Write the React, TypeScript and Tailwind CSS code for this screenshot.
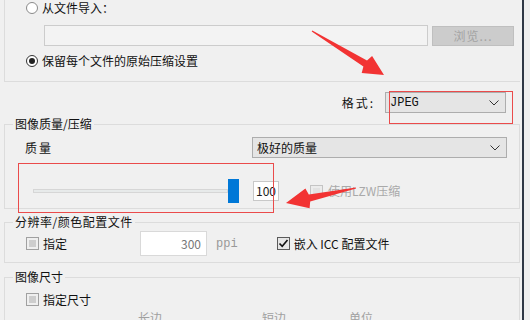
import React from "react";

const cjk = { fontFamily: '"Noto Sans CJK SC", "Noto Sans", sans-serif' };
const mono = { fontFamily: '"Liberation Mono", "Noto Sans CJK SC", monospace' };

function Radio({ checked }: { checked?: boolean }) {
  return (
    <span
      className={`w-[12px] h-[12px] rounded-full border bg-white flex items-center justify-center ${
        checked ? "border-[#333]" : "border-[#8a8a8a]"
      }`}
    >
      {checked && <span className="w-[6px] h-[6px] rounded-full bg-[#222]" />}
    </span>
  );
}

function Check({ checked, disabled }: { checked?: boolean; disabled?: boolean }) {
  if (checked) {
    return (
      <span className="shrink-0 w-[13px] h-[13px] border border-[#5a5a5a] bg-[#e6e6e6] flex items-center justify-center">
        <svg width="11" height="11" viewBox="0 0 11 11">
          <polyline points="1.5,5.5 4.2,8.3 9.5,2" fill="none" stroke="#111" strokeWidth="1.6" />
        </svg>
      </span>
    );
  }
  return (
    <span
      className={`block shrink-0 w-[13px] h-[13px] border p-[2px] ${
        disabled ? "border-[#c4c4c4] bg-[#ececec]" : "border-[#a0a0a0] bg-[#efefef]"
      }`}
    >
      <span className={`block w-full h-full ${disabled ? "bg-[#e2e2e2]" : "bg-[#cdcdcd]"}`} />
    </span>
  );
}

function Chevron() {
  return (
    <svg width="10" height="6" viewBox="0 0 10 6">
      <polyline points="0.5,0.5 5,5 9.5,0.5" fill="none" stroke="#333" strokeWidth="1" />
    </svg>
  );
}

function Select({ value, width, isMono }: { value: string; width: string; isMono?: boolean }) {
  return (
    <div
      className={`${width} h-[21px] border border-[#adadad] bg-[#e5e5e5] flex items-center justify-between pl-[4px] pr-[6px] text-[12px] leading-[16px] text-[#111]`}
    >
      <span style={isMono ? mono : cjk}>{value}</span>
      <Chevron />
    </div>
  );
}

export default function App() {
  return (
    <div
      className="w-[530px] h-[320px] overflow-hidden bg-[#f0f0f0] flex relative text-[12px] leading-[16px] text-[#111]"
      style={cjk}
    >
      <div className="w-[522px] flex flex-col pl-[4px]">
        {/* import group (top cut off) */}
        <div className="shrink-0 w-[516px] h-[82px] border-l border-b border-[#dcdcdc] flex flex-col">
          <div className="mt-[1px] h-[14px] flex items-center gap-[4px] pl-[21px]">
            <Radio />
            <span>从文件导入：</span>
          </div>
          <div className="mt-[10px] flex items-start pl-[39px] gap-[4px]">
            <div className="w-[384px] h-[21px] border border-[#cccccc] bg-[#f3f3f3]" />
            <div className="mt-[1px] w-[82px] h-[20px] border border-[#bfbfbf] bg-[#cccccc] flex items-center justify-center text-[#a3a3a3] tracking-[1px]">
              浏览...
            </div>
          </div>
          <div className="mt-[8px] h-[14px] flex items-center gap-[4px] pl-[21px]">
            <Radio checked />
            <span>保留每个文件的原始压缩设置</span>
          </div>
        </div>

        {/* format */}
        <div className="shrink-0 mt-[10px] flex items-center justify-end gap-[10px] pr-[16px]">
          <span className="tracking-[2px]">格式:</span>
          <Select value="JPEG" width="w-[121px]" isMono />
        </div>

        {/* quality */}
        <fieldset className="shrink-0 mt-[3px] w-[516px] border border-[#dcdcdc] pb-[5px]">
          <legend className="ml-[8px] px-[2px]">图像质量/压缩</legend>
          <div className="mt-[5px] flex items-center justify-between pl-[20px] pr-[12px]">
            <span className="tracking-[2px]">质量</span>
            <Select value="极好的质量" width="w-[255px]" />
          </div>
          <div className="mt-[21px] h-[24px] flex items-center pl-[28px]">
            <div className="w-[195px] h-[4px] border border-[#d6d6d6] bg-[#e7eaea]" />
            <div className="w-[11px] h-[24px] bg-[#0078d7]" />
            <div className="ml-[14px] w-[26px] h-[20px] border border-[#c8c8c8] bg-white flex items-center justify-center text-[12px] text-[#1a1a1a]">
              100
            </div>
            <div className="ml-[31px]">
              <Check disabled />
            </div>
            <span className="ml-[5px] text-[#a9a9a9]">使用LZW压缩</span>
          </div>
        </fieldset>

        {/* resolution */}
        <fieldset className="shrink-0 mt-[5px] w-[516px] border border-[#dcdcdc] pb-[6px]">
          <legend className="ml-[8px] px-[2px] tracking-[0.5px]">分辨率/颜色配置文件</legend>
          <div className="mt-[1px] h-[25px] flex items-center pl-[21px]">
            <Check />
            <span className="ml-[4px]">指定</span>
            <div className="ml-[73px] w-[67px] h-[25px] border border-[#d9d9d9] bg-white flex items-center justify-end pr-[5px] text-[#777]">
              300
            </div>
            <span className="ml-[9px] text-[#999]" style={mono}>
              ppi
            </span>
            <div className="ml-[39px]">
              <Check checked />
            </div>
            <span className="ml-[4px] whitespace-pre">嵌入 ICC 配置文件</span>
          </div>
        </fieldset>

        {/* size */}
        <fieldset className="shrink-0 mt-[6px] w-[516px] h-[80px] border border-[#dcdcdc]">
          <legend className="ml-[8px] px-[2px]">图像尺寸</legend>
          <div className="mt-[8px] h-[13px] flex items-center pl-[21px]">
            <Check />
            <span className="ml-[4px]">指定尺寸</span>
          </div>
          <div className="mt-[4px] flex text-[#a0a0a0]">
            <span className="ml-[133px]">长边</span>
            <span className="ml-[100px]">短边</span>
            <span className="ml-[63px]">单位</span>
          </div>
        </fieldset>
      </div>
      <div className="w-[2px] bg-[#2f3744]" />
      <div className="flex-1 bg-[#eeeeee]" />

      {/* annotations */}
      <div className="absolute left-[389px] top-[91px] w-[124px] h-[33px] border border-[#ea4b4b] pointer-events-none" />
      <div className="absolute left-[18px] top-[163px] w-[256px] h-[50px] border border-[#ea4b4b] pointer-events-none" />
      <svg className="absolute inset-0 pointer-events-none" width="530" height="320">
        <polygon
          points="312.3,30.6 367,60.6 372.1,56.1 384,75 361.7,73.1 363.4,66.6 311.7,31.4"
          fill="#f23333"
        />
        <polygon
          points="355.9,187.5 308.8,194.6 305.4,188.6 286,203 309.6,208.2 310.2,201.4 356.1,188.5"
          fill="#f23333"
        />
      </svg>
    </div>
  );
}
